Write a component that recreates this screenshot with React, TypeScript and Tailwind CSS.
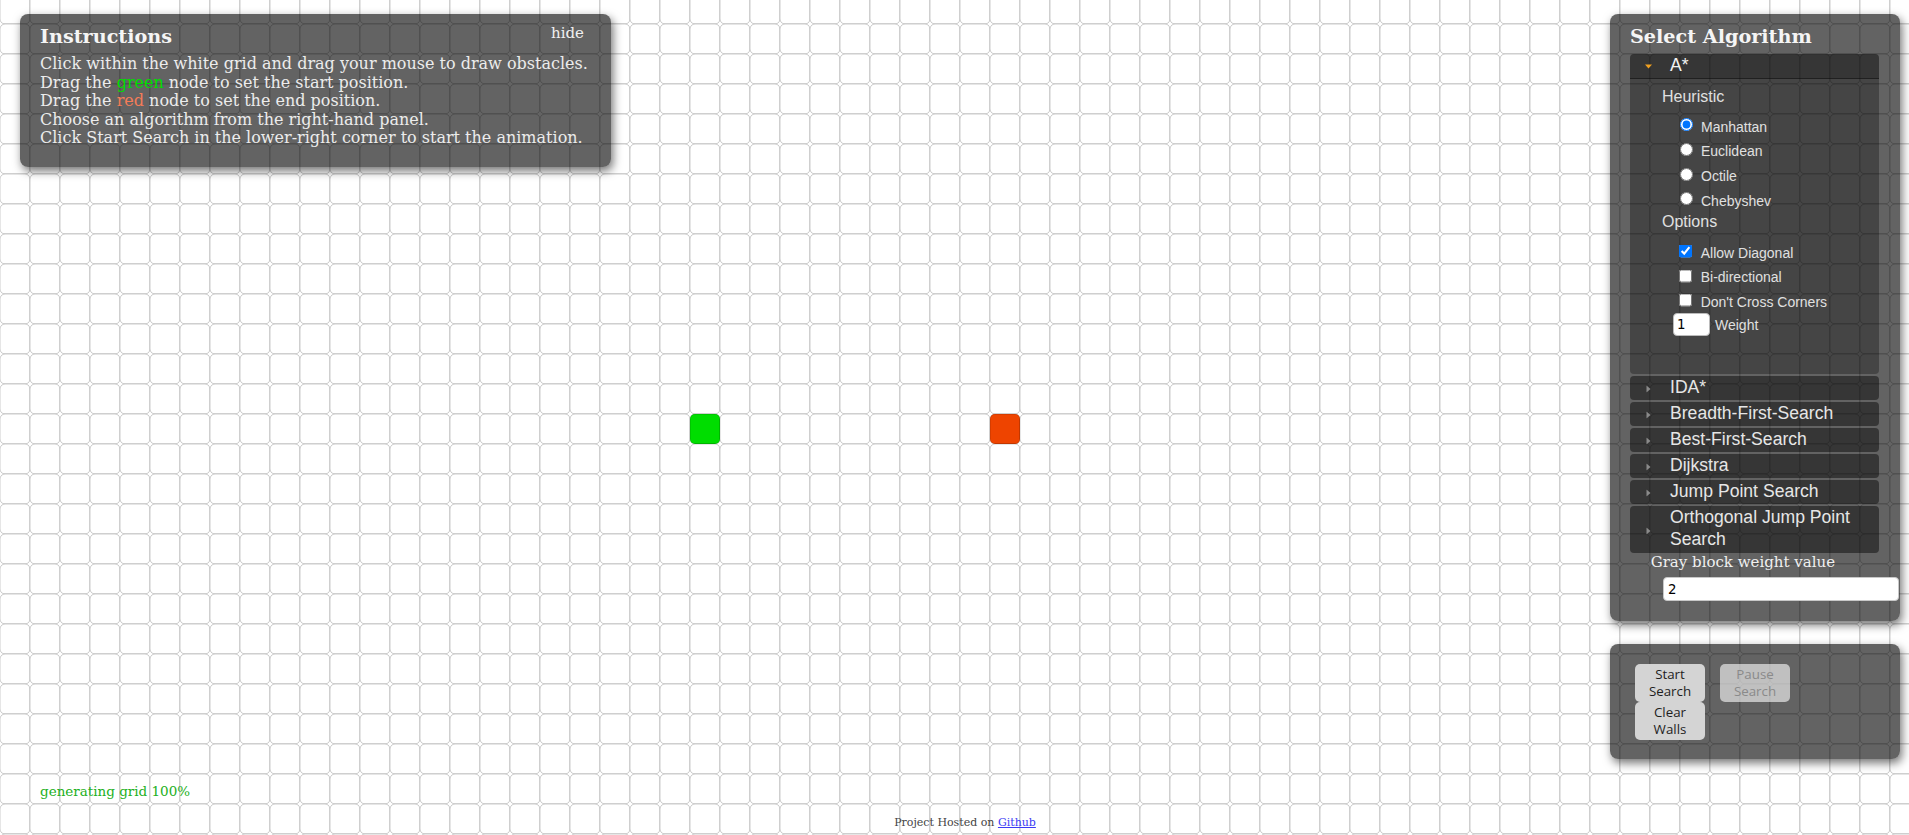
import React from "react";

const COLS = 64;
const ROWS = 29;

function Grid() {
  const cells: React.ReactElement[] = [];
  for (let r = 0; r < ROWS; r++) {
    for (let c = 0; c < COLS; c++) {
      const start = r === 14 && c === 23;
      const end = r === 14 && c === 33;
      cells.push(
        <rect
          key={`${r}-${c}`}
          x={c * 30}
          y={-6 + r * 30}
          width={30}
          height={30}
          rx={5}
          fill={start ? "#00dd00" : end ? "#ee4400" : "#fff"}
          stroke="#000"
          strokeOpacity={0.2}
          strokeWidth={1}
        />
      );
    }
  }
  return (
    <svg className="absolute left-0 top-0" width={1909} height={835}>
      <rect x={0} y={0} width={1909} height={835} fill="#fff" />
      {cells}
    </svg>
  );
}

function Arrow({ open }: { open?: boolean }) {
  return open ? (
    <svg width="7" height="5" viewBox="0 0 7 5" className="absolute left-[15px] top-[10px]">
      <path d="M0 0.5 L7 0.5 L3.5 4.5 Z" fill="#f0a020" />
    </svg>
  ) : (
    <svg width="5" height="7" viewBox="0 0 5 7" className="absolute left-[16px] top-1/2 -translate-y-1/2 mt-[1px]">
      <path d="M0.5 0 L4.5 3.5 L0.5 7 Z" fill="#8a8a8a" />
    </svg>
  );
}

function Header({ children, tall }: { children: React.ReactNode; tall?: boolean }) {
  return (
    <div
      className={`relative mt-[2px] rounded-[4px] bg-black/45 pl-[40px] pr-[8px] text-[17.6px] leading-[22.7px] text-[#e6e6e6] ${
        tall ? "h-[47px]" : "h-[24px]"
      }`}
    >
      <Arrow />
      <div className="relative -top-[0.5px]">{children}</div>
    </div>
  );
}

export default function App() {
  const sans = "font-['Liberation_Sans',Arial,sans-serif]";
  return (
    <div className="relative w-[1909px] h-[835px] overflow-hidden bg-white font-['DejaVu_Serif',serif]">
      <Grid />

      {/* Instructions panel */}
      <div className="absolute left-[20px] top-[14px] w-[591px] h-[153px] rounded-[8px] bg-black/[0.61] shadow-[2px_4px_10px_rgba(0,0,0,0.55)] px-[20px] pt-[11px] text-[#ececec]">
        <div className="text-[19.2px] leading-[24px] font-bold text-[#f5f5f5]">Instructions</div>
        <div className="absolute right-[27px] top-[9px] text-[15px] leading-[20px] text-[#f0f0f0]">hide</div>
        <div className="mt-[6px] text-[16px] leading-[18.6px]">
          <div>Click within the white grid and drag your mouse to draw obstacles.</div>
          <div>
            Drag the <span className="text-[#00dd00]">green</span> node to set the start position.
          </div>
          <div>
            Drag the <span className="text-[#f47c58]">red</span> node to set the end position.
          </div>
          <div>Choose an algorithm from the right-hand panel.</div>
          <div>Click Start Search in the lower-right corner to start the animation.</div>
        </div>
      </div>

      {/* Algorithm panel */}
      <div className="absolute left-[1610px] top-[14px] w-[290px] rounded-[8px] bg-black/[0.61] shadow-[2px_4px_10px_rgba(0,0,0,0.55)] px-[20px] pt-[11px] pb-[20px] text-[#ececec]">
        <div className="text-[19.2px] leading-[24px] font-bold text-[#f5f5f5]">Select Algorithm</div>
        <div className={`mt-[5px] w-[249px] ${sans}`}>
          {/* A* open */}
          <div className="relative h-[25px] rounded-t-[4px] border-b border-black/40 bg-black/45 pl-[40px] text-[17.6px] leading-[23px] text-[#f2f2f2]">
            <Arrow open />
            A*
          </div>
          <div className="h-[295px] rounded-b-[4px] bg-black/30 pl-[32px] pt-[9px] text-[#e0e0e0]">
            <div className="text-[16px] leading-[18.4px]">Heuristic</div>
            <div className="mt-[8px]">
              {["Manhattan", "Euclidean", "Octile", "Chebyshev"].map((h, i) => (
                <div key={h} className="flex h-[24.7px] items-center pl-[17.5px]">
                  <input
                    type="radio"
                    name="heur"
                    defaultChecked={i === 0}
                    className="m-0 h-[13px] w-[13px] -translate-y-[2px]"
                  />
                  <span className="ml-[8.5px] text-[14px] leading-[16px]">{h}</span>
                </div>
              ))}
            </div>
            <div className="text-[16px] leading-[18.4px]">Options</div>
            <div className="mt-[9px]">
              {["Allow Diagonal", "Bi-directional", "Don't Cross Corners"].map((h, i) => (
                <div key={h} className="flex h-[24.5px] items-center pl-[17px]">
                  <input
                    type="checkbox"
                    defaultChecked={i === 0}
                    className="m-0 h-[13px] w-[13px] -translate-y-[1.5px]"
                  />
                  <span className="ml-[8.7px] text-[14px] leading-[16px]">{h}</span>
                </div>
              ))}
            </div>
            <div className="flex items-center pl-[11px] -mt-[1px]">
              <input
                type="text"
                defaultValue="1"
                className="h-[23px] w-[37px] rounded-[4px] border border-[#bbb] bg-white px-[3px] text-[13.33px] text-black font-['DejaVu_Sans',sans-serif] outline-none"
              />
              <span className="ml-[5px] text-[14px] leading-[16px]">Weight</span>
            </div>
          </div>
          <Header>IDA*</Header>
          <Header>Breadth-First-Search</Header>
          <Header>Best-First-Search</Header>
          <Header>Dijkstra</Header>
          <Header>Jump Point Search</Header>
          <Header tall>
            Orthogonal Jump Point
            <br />
            Search
          </Header>
        </div>
        <div className="pl-[20.7px] text-[15px] leading-[18.6px] text-[#f0f0f0]">Gray block weight value</div>
        <div className="mt-[5px] pl-[33px]">
          <input
            type="text"
            defaultValue="2"
            className="h-[24px] w-[236px] rounded-[4px] border border-[#c8c8c8] bg-white px-[4px] text-[13.33px] text-black font-['DejaVu_Sans',sans-serif] outline-none"
          />
        </div>
      </div>

      {/* Play panel */}
      <div className="absolute left-[1610px] top-[644px] h-[115px] w-[290px] rounded-[8px] bg-black/[0.61] shadow-[2px_4px_10px_rgba(0,0,0,0.55)] pl-[25px] pt-[20px] font-['Open_Sans',sans-serif] text-[13.33px] leading-[16.7px]">
        <div className="flex gap-[15px]">
          <div className="flex flex-col">
            <div className="flex h-[38px] w-[70px] flex-col items-center justify-center rounded-[5px] bg-[#d4d4d4] text-[#1e1e1e]">
              <span>Start</span>
              <span>Search</span>
            </div>
            <div className="flex h-[38px] w-[70px] flex-col items-center justify-center rounded-[5px] bg-[#d4d4d4] text-[#1e1e1e]">
              <span>Clear</span>
              <span>Walls</span>
            </div>
          </div>
          <div className="flex h-[38px] w-[70px] flex-col items-center justify-center rounded-[5px] bg-white/60 text-[#8a8a8a]">
            <span>Pause</span>
            <span>Search</span>
          </div>
        </div>
      </div>

      {/* status */}
      <div className="absolute left-[40px] top-[783px] text-[13.5px] leading-[17px] text-[#22b022]">generating grid 100%</div>

      {/* footer */}
      <div className="absolute left-0 right-0 top-[816px] pl-[21px] text-center text-[11px] leading-[14px] text-[#444]">
        Project Hosted on <a className="text-[#3b3bf5] underline">Github</a>
      </div>
    </div>
  );
}
